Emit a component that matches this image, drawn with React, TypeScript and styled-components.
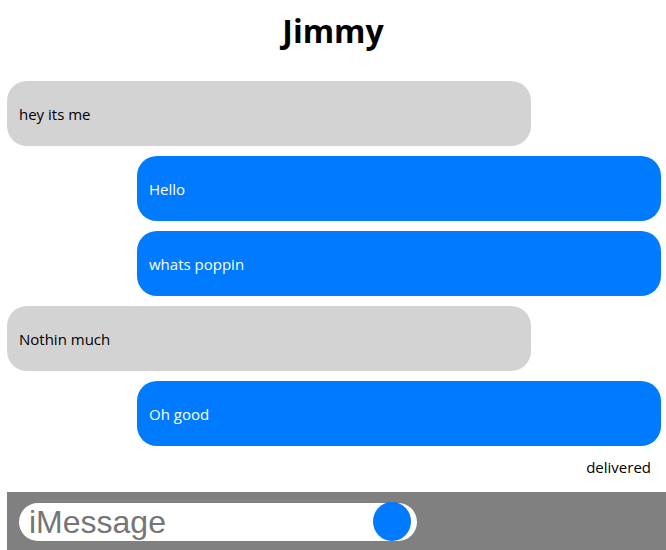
import React from "react";
import styled, { createGlobalStyle } from "styled-components";

const Global = createGlobalStyle`
  html, body { margin: 0; padding: 0; background: #ffffff; }
  body { font-family: "Open Sans", "Noto Sans", sans-serif; color: #000; }
  * { box-sizing: border-box; }
`;

const Page = styled.div`
  width: 666px;
  height: 550px;
  display: flex;
  flex-direction: column;
  padding-left: 7px;
  overflow: hidden;
`;

const Title = styled.h1`
  margin: 0 0 19px;
  height: 62px;
  padding-right: 7px;
  display: flex;
  align-items: center;
  justify-content: center;
  font-size: 32px;
  font-weight: 700;
  line-height: 1;
`;

const Thread = styled.div`
  display: flex;
  flex-direction: column;
  gap: 10px;
  width: 654px;
`;

const Bubble = styled.div<{ $mine?: boolean }>`
  width: 524px;
  height: 65px;
  border-radius: 20px;
  padding: 0 12px;
  display: flex;
  align-items: center;
  align-self: ${(p) => (p.$mine ? "flex-end" : "flex-start")};
  background: ${(p) => (p.$mine ? "#007aff" : "#d3d3d3")};
  color: ${(p) => (p.$mine ? "#ffffff" : "#000000")};
  font-size: 15px;
`;

const Status = styled.div`
  width: 654px;
  height: 46px;
  padding: 11px 10px 0 0;
  text-align: right;
  font-size: 15px;
  line-height: 20px;
`;

const Bar = styled.div`
  flex: 1;
  background: #808080;
  padding: 11px 0 0 12px;
`;

const Field = styled.div`
  position: relative;
  width: 398px;
  height: 38px;
  border-radius: 19px;
  background: #ffffff;
  display: flex;
  align-items: center;
`;

const Input = styled.input`
  border: none;
  outline: none;
  background: transparent;
  width: 340px;
  padding: 0 0 0 10px;
  font-family: "Liberation Sans", Arial, sans-serif;
  font-size: 32px;
  color: #757575;
  &::placeholder { color: #757575; }
`;

const SendDot = styled.div`
  position: absolute;
  right: 6px;
  top: -1px;
  width: 38px;
  height: 39px;
  border-radius: 50%;
  background: #007aff;
`;

const messages: { text: string; mine: boolean }[] = [
  { text: "hey its me", mine: false },
  { text: "Hello", mine: true },
  { text: "whats poppin", mine: true },
  { text: "Nothin much", mine: false },
  { text: "Oh good", mine: true },
];

export default function App() {
  return (
    <>
      <Global />
      <Page>
        <Title>Jimmy</Title>
        <Thread>
          {messages.map((m, i) => (
            <Bubble key={i} $mine={m.mine}>
              {m.text}
            </Bubble>
          ))}
        </Thread>
        <Status>delivered</Status>
        <Bar>
          <Field>
            <Input placeholder="iMessage" />
            <SendDot />
          </Field>
        </Bar>
      </Page>
    </>
  );
}
